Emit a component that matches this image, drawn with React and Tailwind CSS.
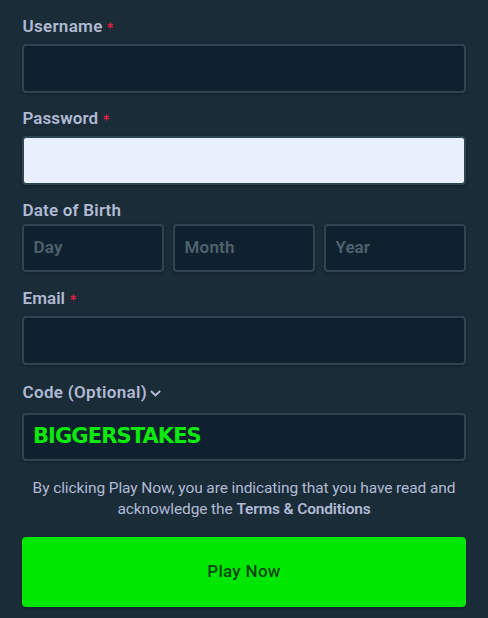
const boxClass =
  'block w-full rounded border-2 border-[#2f4553] px-[9.5px] font-semibold text-[#b1bad3] outline-none shadow-[0_1px_3px_rgba(0,0,0,0.2),0_1px_2px_rgba(0,0,0,0.12)] placeholder:text-[#4f626f] placeholder:opacity-100';

function Label({ children, required, spacing }) {
  return (
    <div className={`flex h-6 items-center pl-[0.5px] text-[17px] font-semibold leading-6 text-[#b1bad3] ${spacing}`}>
      <span>{children}</span>
      {required && (
        <svg className="mb-px ml-[4.5px] h-[7px] w-[7px] text-[#ed2145]" viewBox="0 0 7 7" fill="none" stroke="currentColor" strokeWidth="1.2">
          <path d="M3.5 .5v6M.8 2l5.4 3M6.2 2L.8 5" />
        </svg>
      )}
    </div>
  );
}

export default function App() {
  return (
    <main className="h-[618px] w-[488px] overflow-hidden bg-[#1a2c38] px-[22px] pt-[14px] font-['Roboto','Open_Sans',sans-serif]">
      <form className="flex flex-col" onSubmit={(e) => e.preventDefault()}>
        <Label required spacing="tracking-[0.3px]">Username</Label>
        <input aria-label="Username" className={`${boxClass} mt-[6px] h-[49px] bg-[#0f212e]`} />

        <div className="mt-[13px]">
          <Label required spacing="tracking-[0.05px]">Password</Label>
        </div>
        <input type="password" aria-label="Password" className={`${boxClass} mt-[6px] h-[49px] bg-[#e8f0fe]`} />

        <div className="mt-[13px]">
          <Label spacing="tracking-[0.2px]">Date of Birth</Label>
        </div>
        <div className="mt-[2px] grid grid-cols-3 gap-[9px]">
          <input aria-label="Day" placeholder="Day" className={`${boxClass} h-12 bg-[#0f212e] pb-[2px] text-[17px] tracking-[0.2px]`} />
          <input aria-label="Month" placeholder="Month" className={`${boxClass} h-12 bg-[#0f212e] pb-[2px] text-[17px] tracking-[0.2px]`} />
          <input aria-label="Year" placeholder="Year" className={`${boxClass} h-12 bg-[#0f212e] pb-[2px] text-[17px]`} />
        </div>

        <div className="mt-[14px]">
          <Label required spacing="tracking-[0.05px]">Email</Label>
        </div>
        <input aria-label="Email" className={`${boxClass} mt-[6px] h-[49px] bg-[#0f212e]`} />

        <div className="mt-[15px] flex items-center text-[#b1bad3]">
          <Label spacing="tracking-[0.33px]">Code (Optional)</Label>
          <svg className="ml-[3px] mt-[2px] h-[7px] w-[11px]" viewBox="0 0 11 7" fill="none" stroke="currentColor" strokeWidth="2">
            <path d="M.9 1.1l4.6 4.2 4.6-4.2" />
          </svg>
        </div>
        <div className="mt-[9px] flex h-12 items-center rounded border-2 border-[#2f4553] bg-[#0f212e] px-[9px] font-['DejaVu_Sans',sans-serif] text-[21px] font-bold tracking-[-0.9px] text-[#0be90d] shadow-[0_1px_3px_rgba(0,0,0,0.2),0_1px_2px_rgba(0,0,0,0.12)]">
          BIGGERSTAKES
        </div>

        <p className="mt-[17px] whitespace-nowrap text-center text-[15.5px] leading-[21px] tracking-[-0.1px] text-[#b1bad3]">
          By clicking Play Now, you are indicating that you have read and
          <br />
          acknowledge the <span className="font-semibold tracking-[-0.15px]">Terms &amp; Conditions</span>
        </p>

        <button className="mt-[17px] h-[70px] rounded bg-[#00e701] text-[17px] font-medium tracking-[0.3px] text-[#05480a] shadow-[0_1px_3px_rgba(0,0,0,0.2),0_1px_2px_rgba(0,0,0,0.12)]">
          Play Now
        </button>
      </form>
    </main>
  );
}
